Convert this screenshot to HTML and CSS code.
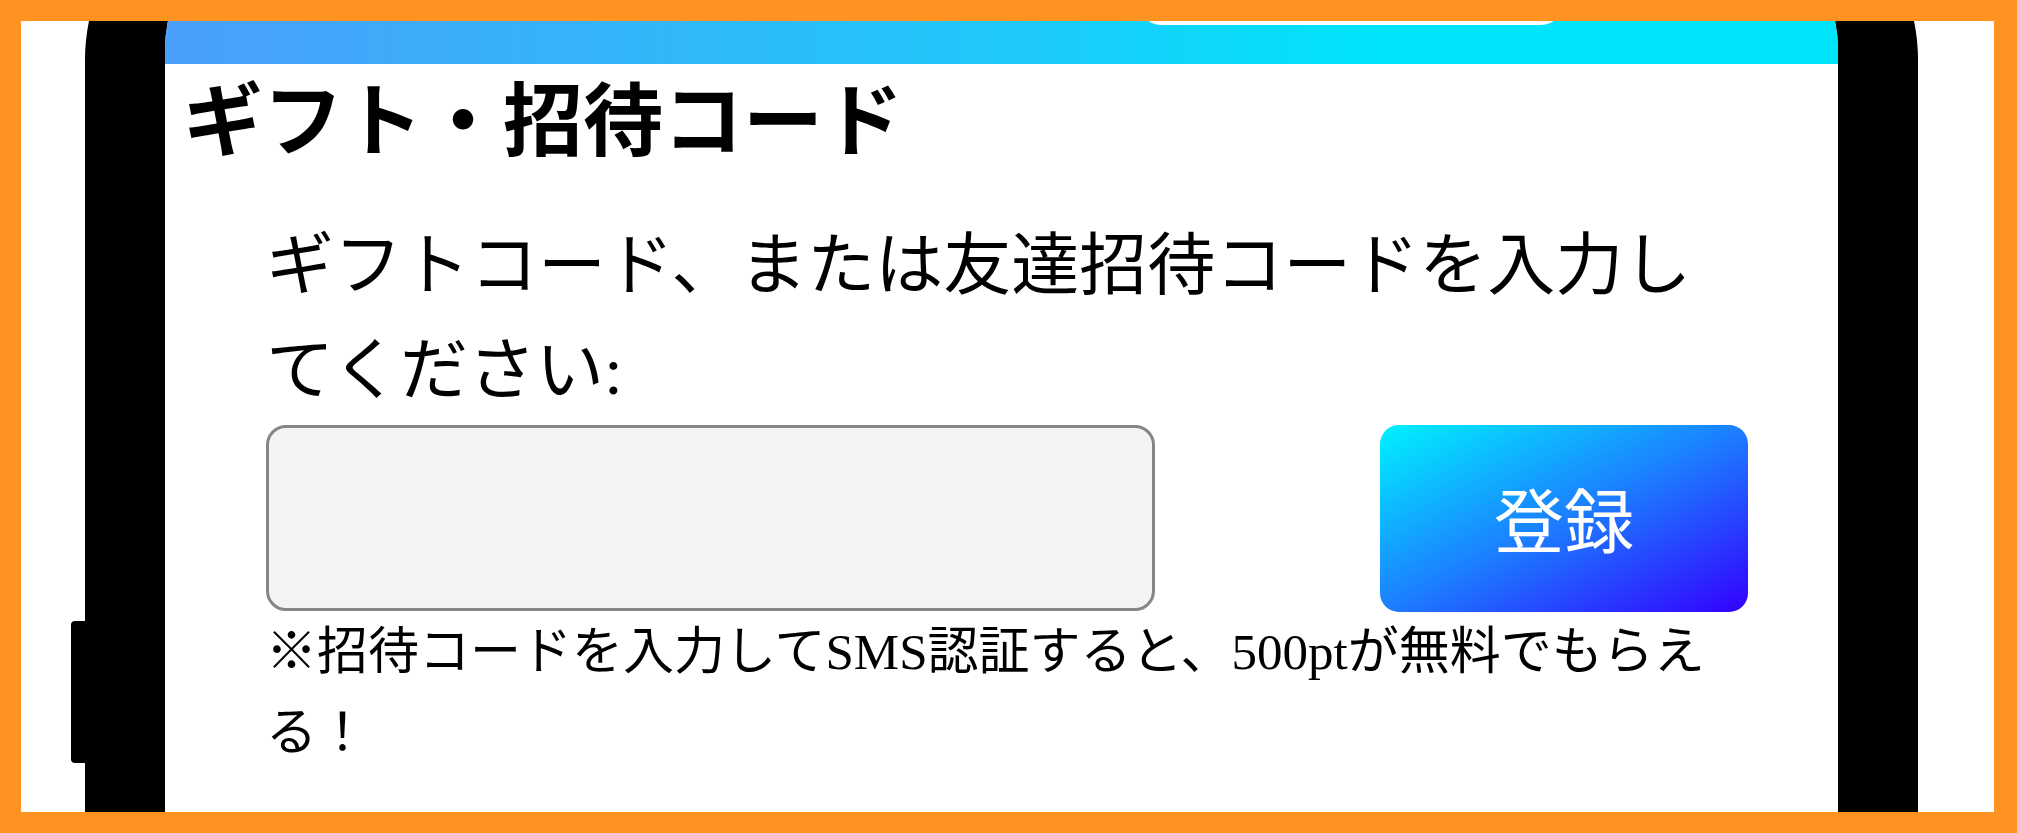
FILE: index.html
```html
<!DOCTYPE html>
<html lang="ja">
<head>
<meta charset="utf-8">
<title>ギフト・招待コード</title>
<link rel="stylesheet" href="styles.css">
</head>
<body>
<div class="frame">
  <div class="stage">
    <div class="phone">
      <span class="side-button"></span>
      <div class="screen">
        <header class="app-header">
          <span class="header-pill"></span>
        </header>
        <main class="content">
          <h1 class="title">ギフト・招待コード</h1>
          <section class="form-block">
            <p class="lead">ギフトコード、または友達招待コードを入力してください:</p>
            <div class="input-row">
              <input class="code-input" type="text" aria-label="コード">
              <button class="submit-btn" type="button">登録</button>
            </div>
            <p class="note">※招待コードを入力してSMS認証すると、500ptが無料でもらえる！</p>
          </section>
        </main>
      </div>
    </div>
  </div>
</div>
</body>
</html>
```

FILE: styles.css
```css
html, body {
  margin: 0;
  padding: 0;
}

body {
  width: 2017px;
  height: 833px;
  overflow: hidden;
  font-family: "Liberation Serif", "Noto Sans CJK JP", serif;
  color: #000;
}

.frame {
  box-sizing: border-box;
  width: 2017px;
  height: 833px;
  background: #ff9322;
  padding: 21px 23px 21px 21px;
}

.stage {
  height: 791px;
  background: #fff;
  overflow: hidden;
}

.phone {
  position: relative;
  box-sizing: border-box;
  width: 1833px;
  min-height: 1200px;
  margin-top: -153px;
  margin-left: 64px;
  padding: 40px 80px 0 80px;
  background: #000;
  border-radius: 192px 192px 0 0;
}

.side-button {
  position: absolute;
  left: -14px;
  top: 753px;
  width: 14px;
  height: 142px;
  background: #000;
  border-radius: 4px 0 0 4px;
}

.screen {
  min-height: 1160px;
  background: #fff;
  border-radius: 142px 142px 0 0;
  overflow: hidden;
}

.app-header {
  display: flex;
  align-items: flex-end;
  height: 156px;
  background: linear-gradient(90deg, #4a9ffa 0%, #20c8fb 50%, #00e4fb 72%, #00e5fb 100%);
}

.header-pill {
  width: 424px;
  height: 60px;
  margin-left: 974px;
  margin-bottom: 39px;
  background: #fff;
  border-radius: 22px;
}

.content {
  padding: 0;
}

.title {
  margin: 2px 0 0 0;
  padding-left: 18px;
  font-family: "Noto Sans CJK JP", sans-serif;
  font-weight: 700;
  font-size: 80px;
  line-height: 96px;
}

.form-block {
  width: 1482px;
  margin-left: 101px;
}

.lead {
  margin: 52px 0 0 0;
  font-size: 68px;
  line-height: 1.55;
  font-weight: 400;
}

.input-row {
  display: flex;
  justify-content: space-between;
  align-items: stretch;
  height: 187px;
}

.code-input {
  box-sizing: border-box;
  width: 889px;
  height: 186px;
  margin: 0;
  border: 3px solid #868686;
  border-radius: 20px;
  background: #f4f4f4;
  outline: none;
}

.submit-btn {
  box-sizing: border-box;
  width: 368px;
  height: 187px;
  margin: 0;
  border: none;
  border-radius: 19px;
  background: linear-gradient(to bottom right, #00f2ff 0%, #1c7eff 50%, #3300ff 100%);
  color: #fff;
  font-family: "Noto Sans CJK JP", sans-serif;
  font-size: 70px;
  font-weight: 400;
  line-height: 1;
  padding: 0;
}

.note {
  margin: 0;
  font-size: 51px;
  line-height: 1.6;
}
```
